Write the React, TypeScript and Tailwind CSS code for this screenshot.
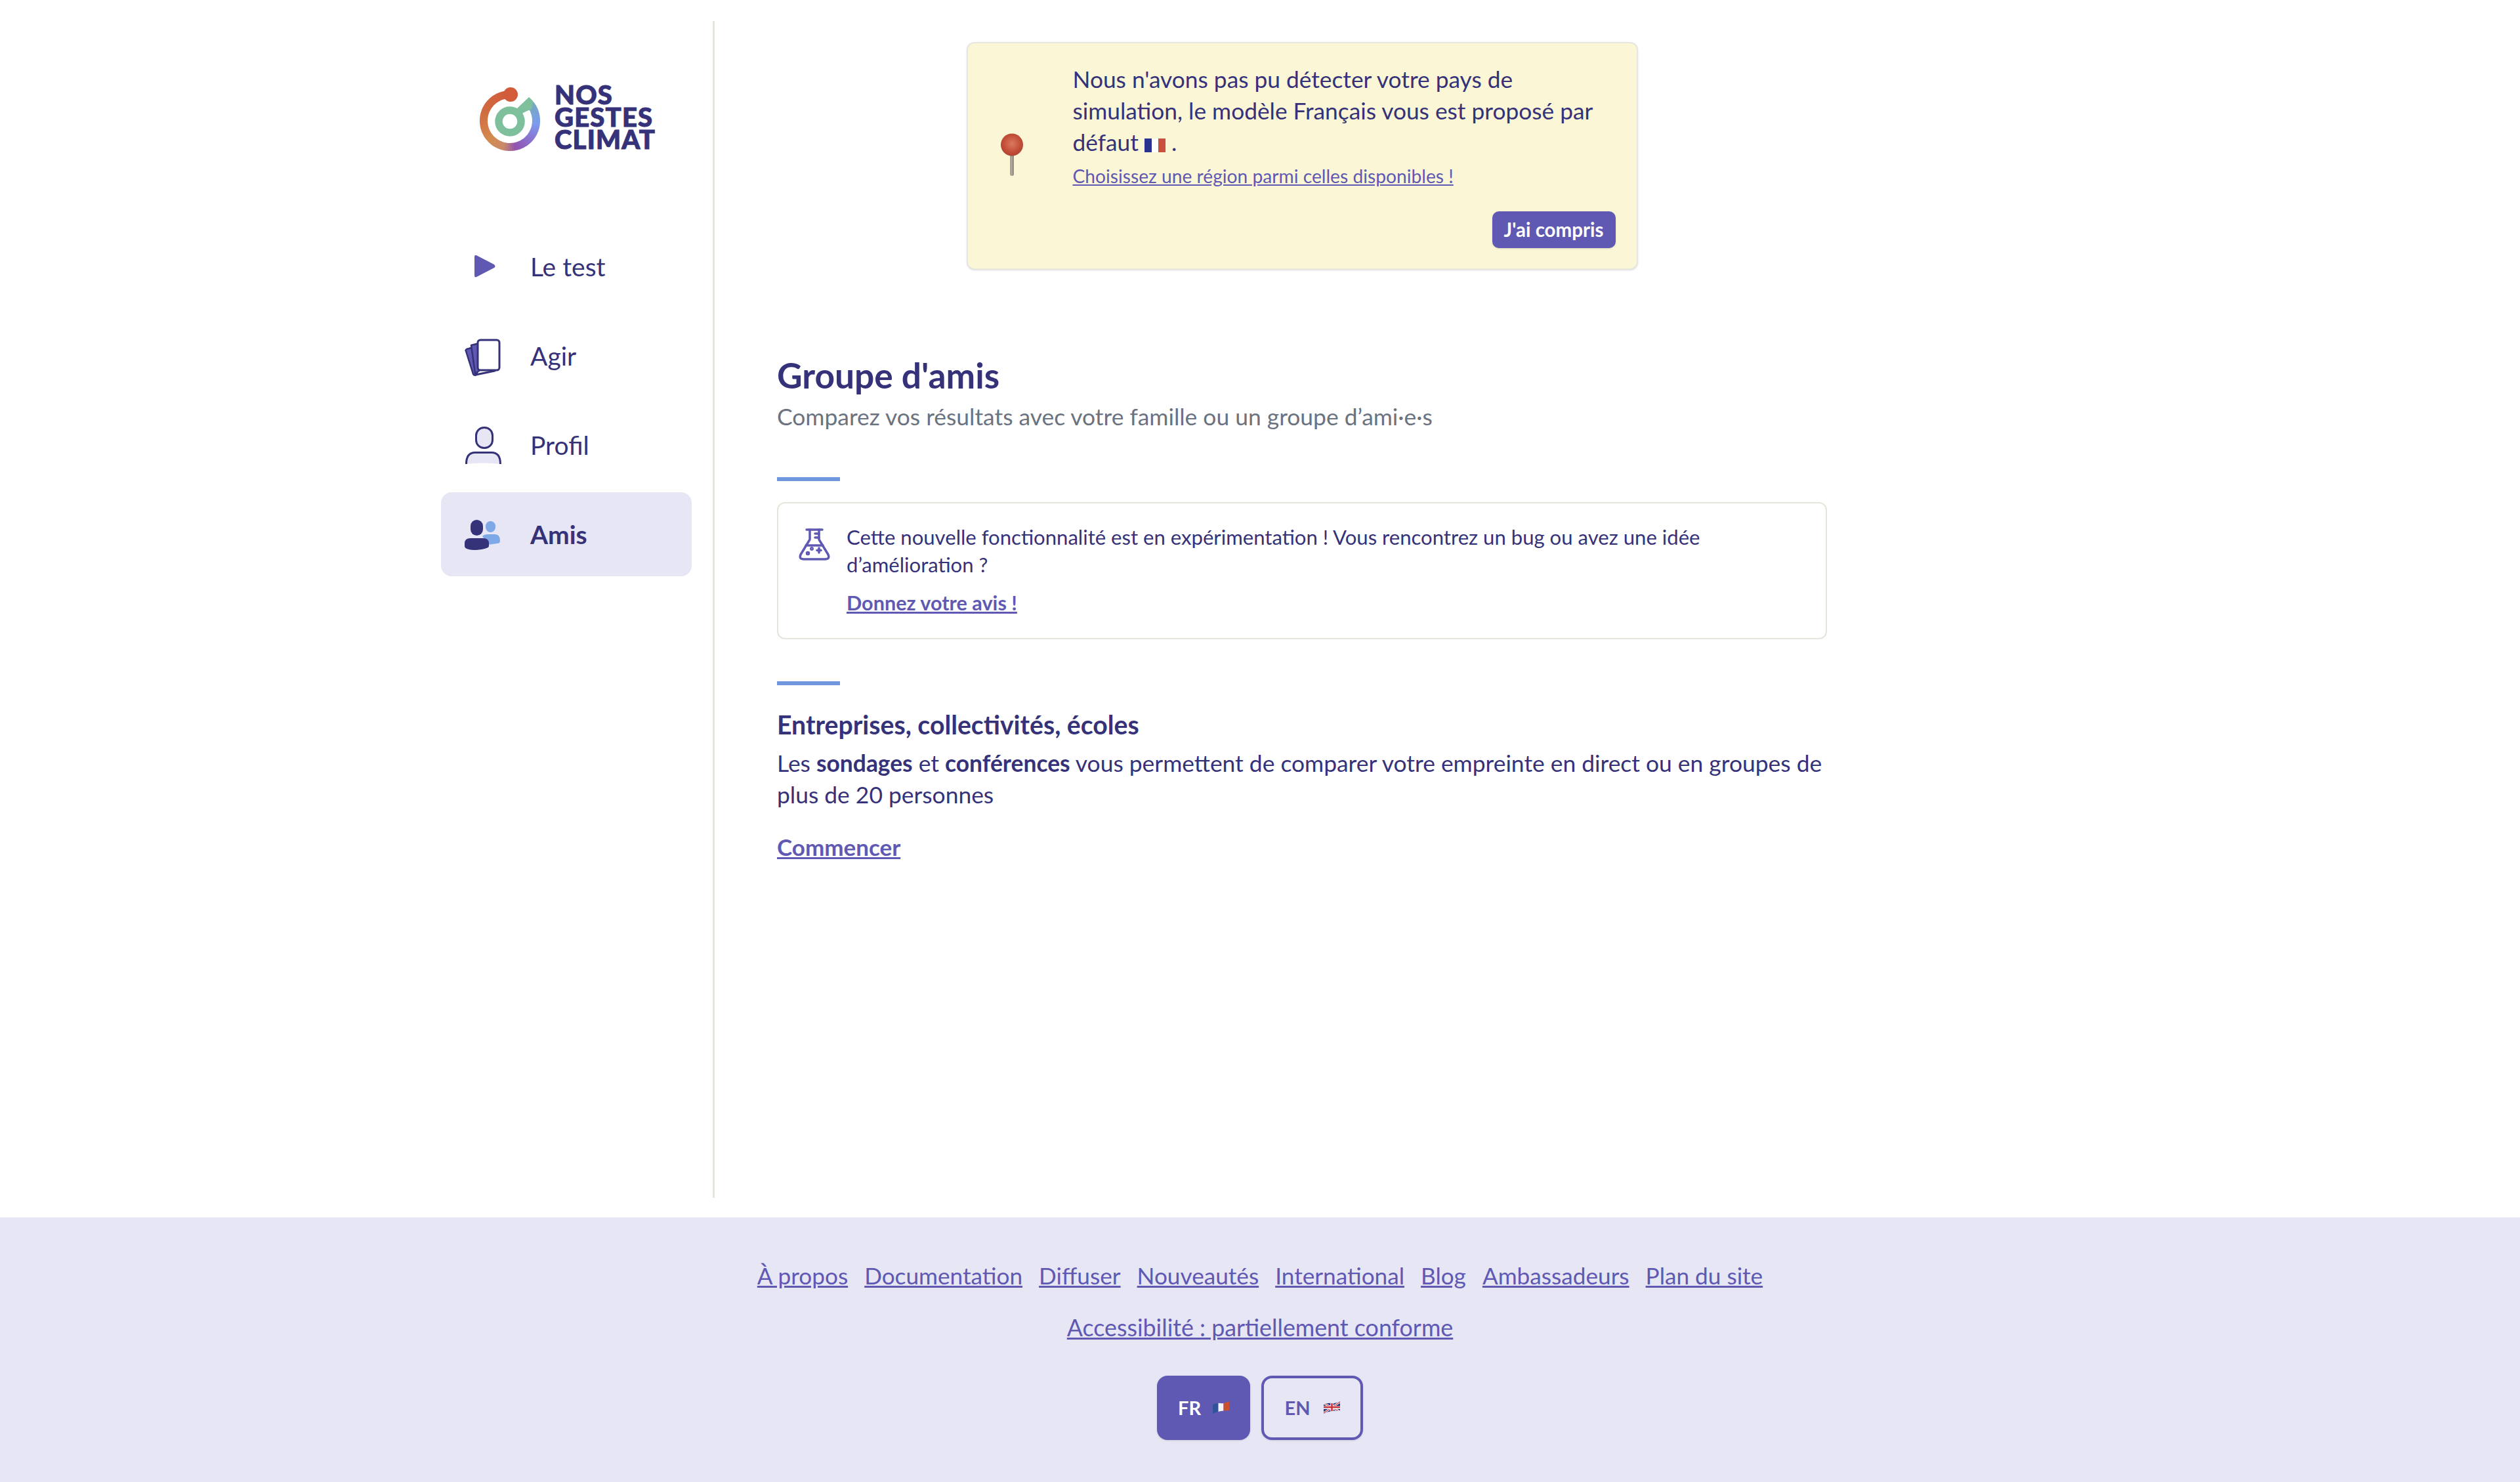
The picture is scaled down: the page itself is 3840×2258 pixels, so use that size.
const dark = '#35327a';

const ringStops: [number, string][] = [
  [0, '#d25c3a'],
  [60, '#d0683f'],
  [130, '#d48a4d'],
  [165, '#c98a6a'],
  [190, '#9353b0'],
  [225, '#8a72cf'],
  [262, '#7b9bee'],
  [300, '#76a8c4'],
  [325, '#7fc09c'],
];

function mix(a: string, b: string, t: number) {
  const pa = [1, 3, 5].map((i) => parseInt(a.slice(i, i + 2), 16));
  const pb = [1, 3, 5].map((i) => parseInt(b.slice(i, i + 2), 16));
  return `rgb(${pa.map((v, i) => Math.round(v + (pb[i] - v) * t)).join(',')})`;
}

function ringColor(deg: number) {
  for (let i = 1; i < ringStops.length; i++) {
    if (deg <= ringStops[i][0]) {
      const [d0, c0] = ringStops[i - 1];
      const [d1, c1] = ringStops[i];
      return mix(c0, c1, (deg - d0) / (d1 - d0));
    }
  }
  return ringStops[ringStops.length - 1][1];
}

function point(cx: number, cy: number, r: number, deg: number) {
  // deg goes counter-clockwise starting from the top of the ring
  const a = (deg * Math.PI) / 180;
  return [cx - r * Math.sin(a), cy - r * Math.cos(a)];
}

function Logo() {
  const segments = [];
  for (let d = 0; d < 318; d += 4) {
    const [x0, y0] = point(50, 54, 40, d);
    const [x1, y1] = point(50, 54, 40, d + 5);
    segments.push(
      <path
        key={d}
        d={`M${x0} ${y0} A40 40 0 0 0 ${x1} ${y1}`}
        fill="none"
        stroke={ringColor(d)}
        strokeWidth="12"
      />
    );
  }
  return (
    <svg width="100" height="104" viewBox="0 0 100 104" className="shrink-0">
      {segments}
      <circle cx="51" cy="14" r="11" fill="#d25c3a" />
      <circle cx="50" cy="55" r="17" fill="none" stroke="#7fc09c" strokeWidth="11.5" />
      <polygon points="60,36 79,18 85,24 83,36 70,42 66,48" fill="#7fc09c" />
    </svg>
  );
}

function PlayIcon() {
  return (
    <svg width="64" height="64" viewBox="0 0 64 64">
      <path d="M19 17 Q19 14 22 15 L49 29 Q52 32 49 34 L22 48 Q19 49 19 46 Z" fill="#5f59b4" />
    </svg>
  );
}

function CardsIcon() {
  return (
    <svg width="64" height="64" viewBox="0 0 64 64">
      <path d="M7 22 L24 17 V55 L22 61 Q19 63 17 60 L6 25 Q5 23 7 22 Z" fill="#5f59b4" stroke={dark} strokeWidth="2.5" strokeLinejoin="round" />
      <path d="M14 16 L26 13 V55 L20 59 Z" fill="#5f59b4" stroke={dark} strokeWidth="2.5" strokeLinejoin="round" />
      <path d="M21 61 L50 55" stroke={dark} strokeWidth="3" strokeLinecap="round" />
      <rect x="24" y="8" width="33" height="46" rx="4" fill="#fff" stroke={dark} strokeWidth="3" />
    </svg>
  );
}

function ProfileIcon() {
  return (
    <svg width="64" height="64" viewBox="0 0 64 64">
      <rect x="21.5" y="5.5" width="25" height="31" rx="12" fill="#e7e6f4" stroke={dark} strokeWidth="3" />
      <path d="M6.5 61 Q6.5 43.5 20 43.5 H45 Q58.5 43.5 58.5 61 Q32 58 6.5 61 Z" fill="#e7e6f4" />
      <path d="M6.5 61 Q6.5 43.5 20 43.5 H45 Q58.5 43.5 58.5 61" fill="none" stroke={dark} strokeWidth="3" />
    </svg>
  );
}

function FriendsIcon() {
  return (
    <svg width="64" height="64" viewBox="0 0 64 64">
      <rect x="36" y="12" width="15" height="17" rx="7.5" fill="#7fa9e6" />
      <path d="M31 35 Q34 32 40 32 H50 Q58 32 58 42 Q58 46 54 46 L40 48 Z" fill="#7fa9e6" />
      <rect x="13" y="10" width="19" height="24" rx="9.5" fill={dark} />
      <path d="M4 46 Q4 38 13 38 H32 Q41 38 41 46 V50 Q41 54 22 56 Q4 56 4 50 Z" fill={dark} />
    </svg>
  );
}

function FlaskIcon() {
  return (
    <svg width="50" height="50" viewBox="0 0 50 50" fill="none" stroke="#5f59b4" strokeWidth="3.5" strokeLinecap="round" strokeLinejoin="round" className="shrink-0">
      <path d="M13 2 H37" />
      <path d="M18 2 V17 L4 40 Q1 47 9 47 H41 Q49 47 46 40 L32 17 V2" />
      <path d="M12 26 H38" />
      <path d="M26 8 H32 M26 14 H32" />
      <circle cx="15" cy="38" r="1.5" />
      <circle cx="21" cy="31" r="1.2" />
      <path d="M32 30 V37 M29 33.5 H35" />
    </svg>
  );
}

function Pin() {
  return (
    <svg width="36" height="66" viewBox="0 0 36 66" className="shrink-0 mt-[106px] ml-[49px]">
      <defs>
        <radialGradient id="pinHead" cx="0.5" cy="0.45" r="0.6">
          <stop offset="0" stopColor="#d97a60" />
          <stop offset="0.6" stopColor="#c5503a" />
          <stop offset="1" stopColor="#a8402f" />
        </radialGradient>
        <linearGradient id="pinNeedle" x1="0" x2="1" y1="0" y2="0">
          <stop offset="0" stopColor="#6e6a5e" />
          <stop offset="0.5" stopColor="#c8c4b8" />
          <stop offset="1" stopColor="#4e4a42" />
        </linearGradient>
      </defs>
      <rect x="15.5" y="30" width="5" height="35" rx="2" fill="url(#pinNeedle)" />
      <circle cx="18" cy="17.5" r="17" fill="url(#pinHead)" />
    </svg>
  );
}

function FranceFlag() {
  return (
    <svg width="32" height="21" viewBox="0 0 32 21" className="inline-block align-[-2px]">
      <rect width="11" height="21" fill="#29338f" />
      <rect x="11" width="10" height="21" fill="#fff" />
      <rect x="21" width="11" height="21" fill="#c94f3f" />
    </svg>
  );
}

const waveOutline = 'M0 5 Q6 2 12 3 T25 0 V14 Q19 14 12 15 T0 19 Z';

function WavyFrance() {
  return (
    <svg width="25" height="19" viewBox="0 0 25 19" className="shrink-0 -translate-y-[1px]">
      <clipPath id="waveFr">
        <path d={waveOutline} />
      </clipPath>
      <g clipPath="url(#waveFr)">
        <rect width="8.5" height="19" fill="#2f5499" />
        <rect x="8.5" width="8" height="19" fill="#f4f4f6" />
        <rect x="16.5" width="8.5" height="19" fill="#cb4f2b" />
      </g>
    </svg>
  );
}

function WavyUk() {
  return (
    <svg width="25" height="19" viewBox="0 0 25 19" className="shrink-0 -translate-y-[1px]">
      <clipPath id="waveUk">
        <path d={waveOutline} />
      </clipPath>
      <g clipPath="url(#waveUk)">
        <rect width="25" height="19" fill="#27357e" />
        <path d="M0 3 L25 16 M25 1 L0 18" stroke="#fff" strokeWidth="3" />
        <path d="M0 3 L25 16 M25 1 L0 18" stroke="#c8323a" strokeWidth="1.1" />
        <path d="M12.5 0 V19 M0 9.5 H25" stroke="#fff" strokeWidth="4.5" />
        <path d="M12.5 0 V19 M0 9 H25" stroke="#c8323a" strokeWidth="2.6" />
      </g>
    </svg>
  );
}

const navItems = [
  { label: 'Le test', icon: <PlayIcon /> },
  { label: 'Agir', icon: <CardsIcon /> },
  { label: 'Profil', icon: <ProfileIcon /> },
  { label: 'Amis', icon: <FriendsIcon />, active: true },
];

const footerLinks = ['À propos', 'Documentation', 'Diffuser', 'Nouveautés', 'International', 'Blog', 'Ambassadeurs', 'Plan du site'];

export default function App() {
  return (
    <div className="min-h-[2258px] flex flex-col bg-white text-[#35327a] font-['Lato','Noto_Sans',sans-serif]">
      <div className="h-[1855px] pl-[640px] pt-[32px] flex">
        <aside className="w-[449px] h-[1793px] border-r-[3px] border-[#e5e5de] pl-[32px] pt-[98px]">
          <div className="flex items-start ml-[55px] h-[212px]">
            <Logo />
            <div className="ml-[18px] mt-[-3px] text-[40px] leading-[34px] font-black tracking-[1.2px] [-webkit-text-stroke:1px_#35327a]">
              <div>NOS</div>
              <div>GESTES</div>
              <div>CLIMAT</div>
            </div>
          </div>
          <nav className="flex flex-col gap-2 w-[382px]">
            {navItems.map((item) => (
              <a
                key={item.label}
                className={`h-[128px] flex items-center pl-[32px] rounded-[16px] text-[39px] ${item.active ? 'bg-[#e7e6f4] font-bold' : ''}`}
              >
                <span className="w-[64px] h-[64px] shrink-0">{item.icon}</span>
                <span className="ml-[40px]">{item.label}</span>
              </a>
            ))}
          </nav>
        </aside>

        <main className="pl-[95px] pt-[32px] w-[1695px]">
          <section className="w-[1023px] h-[347px] mx-auto bg-[#faf6d6] border-2 border-[#e7e7e0] rounded-[12px] shadow-sm">
            <div className="flex pt-[31px]">
              <Pin />
              <div className="ml-[75px]">
                <p className="text-[35.3px] leading-[48px]">
                  Nous n'avons pas pu détecter votre pays de
                  <br />
                  simulation, le modèle Français vous est proposé par
                  <br />
                  défaut <FranceFlag /> .
                </p>
                <a className="block mt-[9px] text-[28.2px] leading-[36px] text-[#5f59b4] underline">Choisissez une région parmi celles disponibles !</a>
              </div>
            </div>
            <div className="flex justify-end pr-[32px] mt-[36px]">
              <button className="w-[188px] h-[56px] bg-[#5f59b4] text-white rounded-[10px] text-[29.5px] font-bold shadow-sm">J'ai compris</button>
            </div>
          </section>

          <h1 className="mt-[128px] text-[53.3px] leading-[64px] font-bold">Groupe d'amis</h1>
          <p className="mt-[8px] text-[35.4px] leading-[48px] text-[#6b7280]">Comparez vos résultats avec votre famille ou un groupe d’ami·e·s</p>

          <div className="mt-[68px] w-[96px] h-[6px] bg-[#6f97dd]" />

          <div className="mt-[32px] w-[1600px] h-[209px] border-2 border-[#e5e5de] rounded-[12px] flex pl-[30px] pt-[38px]">
            <FlaskIcon />
            <div className="ml-[24px]">
              <p className="text-[31.1px] leading-[42px] mt-[-8px]">
                Cette nouvelle fonctionnalité est en expérimentation ! Vous rencontrez un bug ou avez une idée
                <br />
                d’amélioration ?
              </p>
              <a className="block mt-[17px] text-[30.6px] leading-[42px] font-bold text-[#5f59b4] underline">Donnez votre avis !</a>
            </div>
          </div>

          <div className="mt-[64px] w-[96px] h-[6px] bg-[#6f97dd]" />

          <h2 className="mt-[36px] text-[39.2px] leading-[48px] font-bold">Entreprises, collectivités, écoles</h2>
          <p className="mt-[11px] text-[35.4px] leading-[48px] w-[1640px]">
            Les <b>sondages</b> et <b>conférences</b> vous permettent de comparer votre empreinte en direct ou en groupes de
            <br />
            plus de 20 personnes
          </p>
          <a className="block mt-[31px] text-[35px] leading-[48px] font-bold text-[#5f59b4] underline">Commencer</a>
        </main>
      </div>

      <footer className="h-[403px] bg-[#e7e6f4] flex flex-col items-center pt-[64px] text-[#5f59b4] text-[35.2px] leading-[48px]">
        <div className="flex gap-[25px]">
          {footerLinks.map((link) => (
            <a key={link} className="underline">{link}</a>
          ))}
        </div>
        <a className="mt-[32px] text-[35.8px] underline">Accessibilité : partiellement conforme</a>
        <div className="mt-[49px] flex gap-[17px]">
          <button className="w-[142px] h-[98px] rounded-[16px] bg-[#5f59b4] text-white text-[29px] font-bold flex items-center justify-center gap-[18px] shadow-sm">
            FR <WavyFrance />
          </button>
          <button className="w-[155px] h-[98px] rounded-[16px] border-[4px] border-[#5f59b4] text-[#5f59b4] text-[29px] font-bold flex items-center justify-center gap-[20px] shadow-sm">
            EN <WavyUk />
          </button>
        </div>
      </footer>
    </div>
  );
}
